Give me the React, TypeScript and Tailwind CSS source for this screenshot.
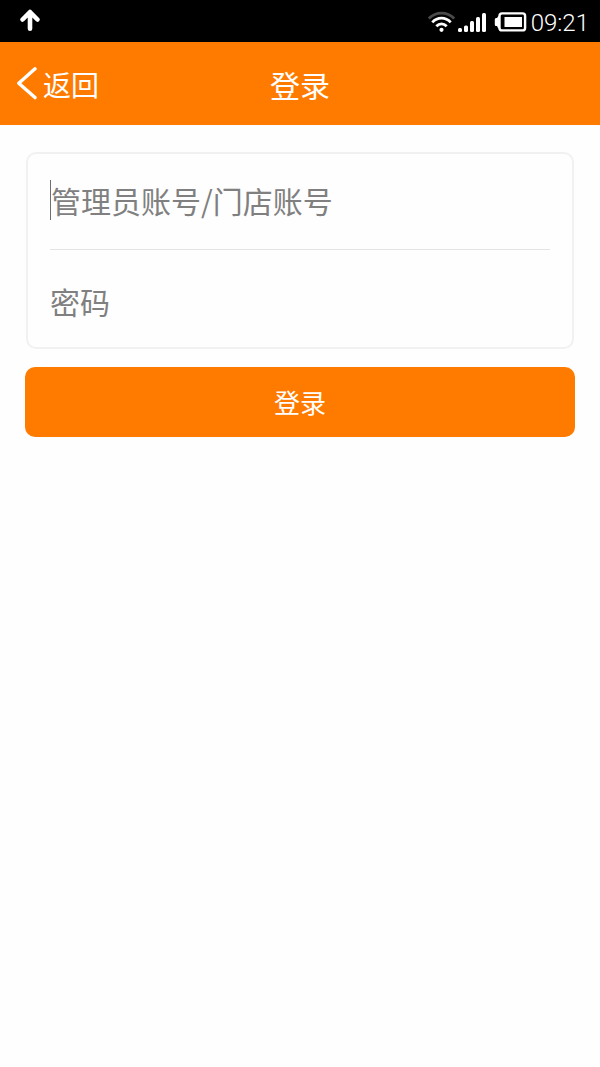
import React from "react";

function StatusBar() {
  return (
    <div className="flex h-[42px] items-center justify-between bg-black pl-5 pr-[11px] text-white">
      <svg width="20" height="24" viewBox="0 0 20 24" fill="none" stroke="currentColor" strokeWidth="4.6" strokeLinecap="round" strokeLinejoin="round" aria-hidden="true">
        <path d="M10 19.8V4M2.6 10.5L10 3L17.4 10.5" />
      </svg>
      <div className="flex items-center pt-0.5">
        <svg width="28" height="22" viewBox="0 0 28 22" fill="none" strokeWidth="2.8" aria-hidden="true">
          <path d="M0.8 7.5C8 0.2 19 0.2 26.2 7.5" stroke="#4a4a4a" />
          <path d="M4.3 11.4C9.5 5.8 17.5 5.8 22.7 11.4" stroke="white" />
          <path d="M8.3 15.3C11.5 12 15.5 12 18.7 15.3" stroke="white" />
          <circle cx="13.5" cy="18.8" r="2.1" fill="white" />
        </svg>
        <svg className="ml-0.5" width="28" height="22" viewBox="0 0 28 22" fill="white" aria-hidden="true">
          <rect x="0" y="17" width="4" height="4" rx="1.5" />
          <rect x="6" y="14.5" width="4" height="6.5" rx="1.5" />
          <rect x="12" y="10" width="4" height="11" rx="1.5" />
          <rect x="18" y="6" width="4" height="15" rx="1.5" />
          <rect x="24" y="2" width="4" height="19" rx="1.5" />
        </svg>
        <svg className="ml-2" width="34" height="22" viewBox="0 0 34 22" aria-hidden="true">
          <path d="M6 4L4 5.5L3 7H2Q0.8 7 0.8 8.5V13.5Q0.8 15 2 15H3L4 17L6 18.5Z" fill="white" />
          <rect x="5.5" y="2.4" width="25.6" height="17" rx="2.5" fill="none" stroke="white" strokeWidth="2.4" />
          <rect x="10.5" y="6" width="17.5" height="10" fill="white" />
        </svg>
        <span className="ml-[3px] pt-0.5 font-['Roboto',sans-serif] text-[24px] leading-6 font-light">09:21</span>
      </div>
    </div>
  );
}

function Header() {
  return (
    <header className="grid h-[83px] grid-cols-3 items-center bg-[#ff7b00] px-4 text-white">
      <button type="button" className="flex items-center gap-[5px] justify-self-start text-[28px] leading-10">
        <svg width="22" height="34" viewBox="0 0 22 34" fill="none" stroke="currentColor" strokeWidth="3.4" strokeLinecap="round" strokeLinejoin="round" aria-hidden="true">
          <path d="M19 1.8L2.8 16.2L19 30.6" />
        </svg>
        返回
      </button>
      <h1 className="justify-self-center text-[30px] leading-10">登录</h1>
    </header>
  );
}

export default function App() {
  const field = "h-12 w-full min-w-0 bg-transparent pb-1 text-[30px] text-[#808080] outline-none placeholder:text-[#808080]";

  return (
    <div className="min-h-screen bg-[#fefefe] font-['Noto_Sans_CJK_SC',sans-serif]">
      <StatusBar />
      <Header />
      <form className="px-[25px] pt-[27px]" onSubmit={(e) => e.preventDefault()}>
        <div className="mx-px rounded-[10px] border-2 border-[#f1f1f1] px-[22px]">
          <div className="flex h-24 items-center border-b border-[#e4e4e4]">
            <span className="mb-1 h-10 w-px shrink-0 bg-[#707070]" />
            <input type="text" name="account" aria-label="管理员账号/门店账号" placeholder="管理员账号/门店账号" className={field} />
          </div>
          <div className="flex h-[97px] items-center pt-2">
            <input type="password" name="password" aria-label="密码" placeholder="密码" className={field} />
          </div>
        </div>
        <button type="submit" className="mt-[18px] h-[70px] w-full rounded-[10px] bg-[#ff7b00] pb-0.5 text-[26px] text-white">
          登录
        </button>
      </form>
    </div>
  );
}
